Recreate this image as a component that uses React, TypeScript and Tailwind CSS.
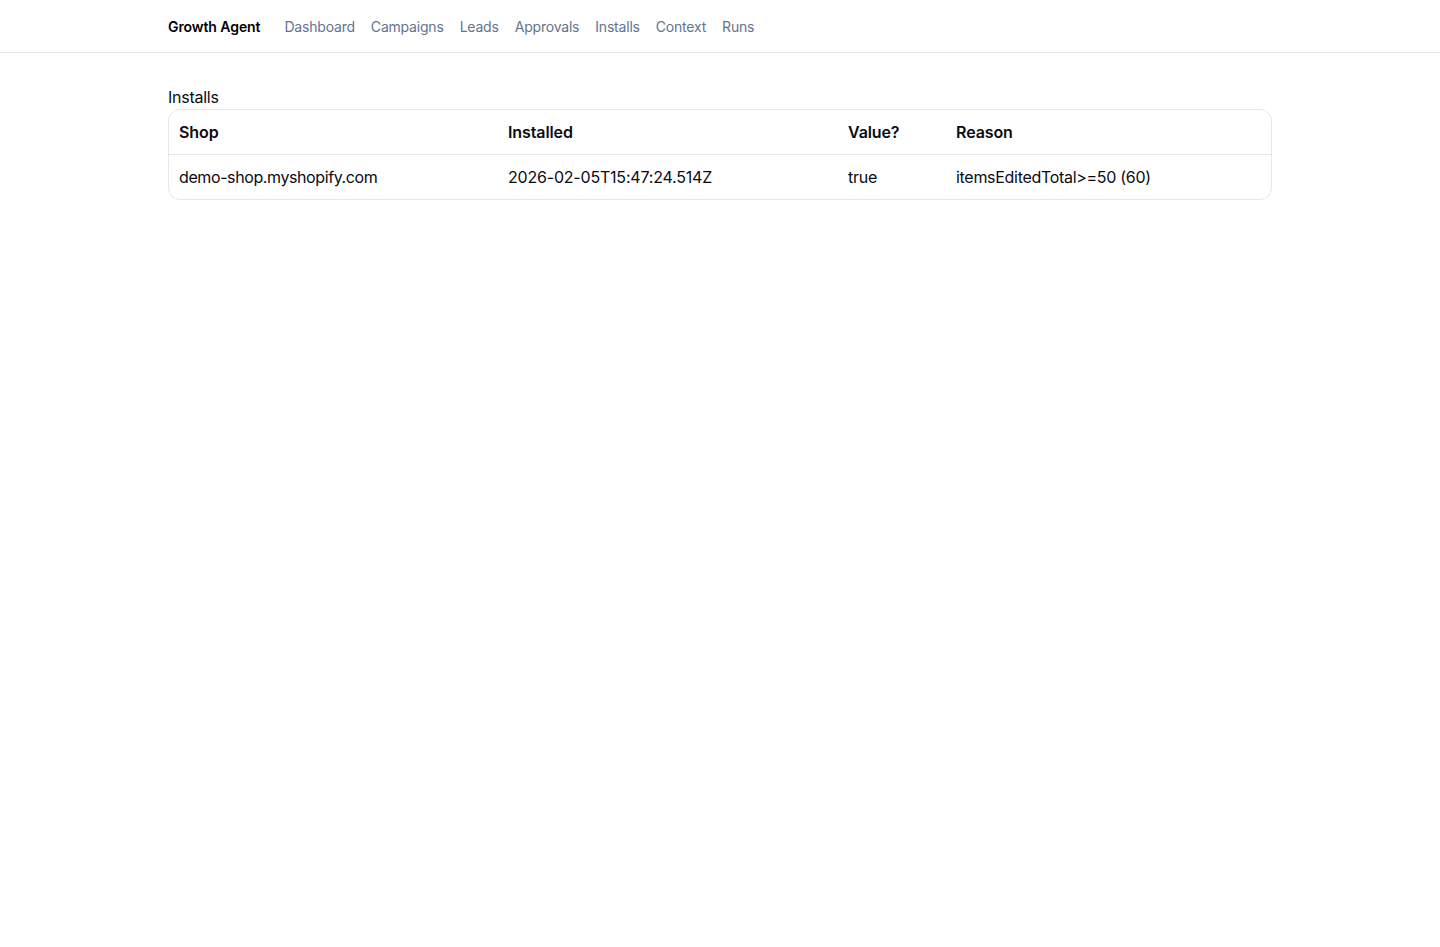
const links = ["Dashboard", "Campaigns", "Leads", "Approvals", "Installs", "Context", "Runs"];

const rows = [
  {
    shop: "demo-shop.myshopify.com",
    installed: "2026-02-05T15:47:24.514Z",
    value: "true",
    reason: "itemsEditedTotal>=50 (60)",
  },
];

export default function App() {
  return (
    <div className="min-h-screen bg-white text-[#0b0b14] font-['Inter',sans-serif] tracking-[-0.25px]">
      <header className="border-b border-slate-200">
        <nav className="mx-auto max-w-6xl px-6 pt-[17px] pb-[15px] flex items-center gap-6 text-sm">
          <span className="font-semibold text-black tracking-[-0.08px]">Growth Agent</span>
          <div className="flex items-center gap-4 tracking-[-0.2px]">
            {links.map((l) => (
              <a key={l} href="#" className="text-slate-500 hover:text-slate-900">
                {l}
              </a>
            ))}
          </div>
        </nav>
      </header>

      <main className="mx-auto max-w-6xl px-6 py-8">
        <h1 className="text-base">Installs</h1>
        <div className="border border-gray-200 rounded-xl overflow-hidden">
          <table className="w-full text-left text-base">
            <thead className="tracking-[-0.1px]">
              <tr className="border-b border-gray-200">
                <th className="w-[329px] px-2.5 py-2.5 font-semibold">Shop</th>
                <th className="w-[340px] px-2.5 py-2.5 font-semibold">Installed</th>
                <th className="w-[108px] px-2.5 py-2.5 font-semibold">Value?</th>
                <th className="px-2.5 py-2.5 font-semibold">Reason</th>
              </tr>
            </thead>
            <tbody>
              {rows.map((r) => (
                <tr key={r.shop} className="border-b border-gray-200 last:border-b-0">
                  <td className="px-2.5 py-2.5 tracking-[-0.4px]">{r.shop}</td>
                  <td className="px-2.5 py-2.5 tracking-[-0.2px]">{r.installed}</td>
                  <td className="px-2.5 py-2.5">{r.value}</td>
                  <td className="px-2.5 py-2.5 tracking-[-0.3px]">{r.reason}</td>
                </tr>
              ))}
            </tbody>
          </table>
        </div>
      </main>
    </div>
  );
}
